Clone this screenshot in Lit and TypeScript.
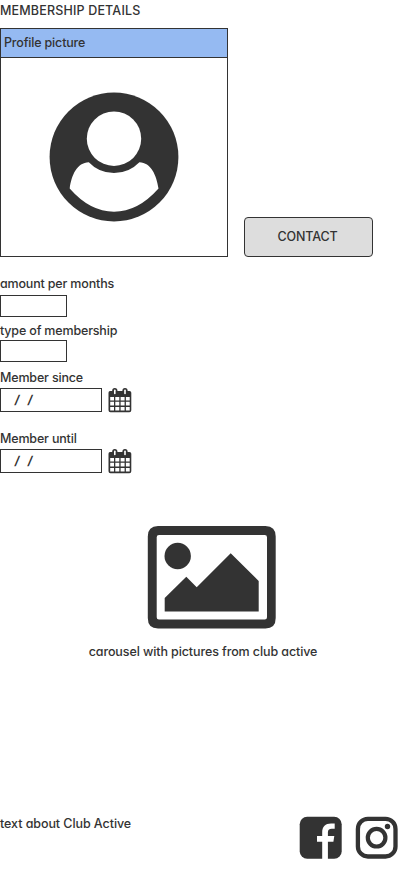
import { LitElement, html, css } from "lit";
import { customElement } from "lit/decorators.js";

const ink = "#333333";

@customElement("date-field")
class DateField extends LitElement {
  static styles = css`
    :host { display: flex; gap: 6px; height: 25px; }
    .box { box-sizing: border-box; width: 102px; height: 24px; border: 1px solid #333; padding-left: 13.5px; line-height: 22px; white-space: pre; font-size: 12px; font-weight: 700; }
    .slash { display: inline-block; width: 13px; }
    .slash span { display: inline-block; transform: skewX(-9deg); }
    svg { display: block; width: 24px; height: 25px; }
  `;
  render() {
    return html`<div class="box"><span class="slash"><span>/</span></span><span class="slash"><span>/</span></span></div>
      <svg viewBox="0 0 24 25" fill=${ink}>
        <path fill-rule="evenodd" d="M2 3H21.500Q23.300 3 23.300 4.800V22.300Q23.300 24.300 21.300 24.300H2.500Q.500 24.300 .500 22.300V4.800Q.500 3 2 3ZM2.200 9V12.500H6V9ZM7.300 9V12.500H11.300V9ZM12.600 9V12.500H16.600V9ZM17.900 9V12.500H21.700V9ZM2.200 13.800V17.600H6V13.800ZM7.300 13.800V17.600H11.300V13.800ZM12.600 13.800V17.600H16.600V13.800ZM17.900 13.800V17.600H21.700V13.800ZM2.200 18.900V22.500H6V18.900ZM7.300 18.900V22.500H11.300V18.900ZM12.600 18.900V22.500H16.600V18.900ZM17.900 18.900V22.500H21.700V18.900Z"/>
        <rect x="4.200" y="0" width="5.200" height="7.300" rx="2.500"/><rect x="14.400" y="0" width="5.200" height="7.300" rx="2.500"/>
        <rect x="6" y="1.500" width="1.600" height="4.800" rx=".8" fill="#fff"/><rect x="16.200" y="1.500" width="1.600" height="4.800" rx=".8" fill="#fff"/>
      </svg>`;
  }
}

@customElement("app-root")
class AppRoot extends LitElement {
  static styles = css`
    :host {
      display: flex; flex-direction: column; box-sizing: border-box; height: 893px; width: 401px;
      background: #fff; color: #333; overflow: hidden;
      font: 500 12.5px/20px Inter, "Liberation Sans", sans-serif;
      font-feature-settings: "cv11" 1, "calt" 0;
      letter-spacing: -0.17px;
    }
    .label { height: 20px; white-space: nowrap; }
    .title { padding-top: 1px; margin-bottom: 7px; letter-spacing: 0.17px; }
    .top { display: flex; align-items: flex-end; gap: 16px; margin-bottom: 17px; }
    .card { box-sizing: border-box; width: 228px; height: 229px; border: 1px solid #333; }
    .head { box-sizing: border-box; height: 29px; padding-left: 3px; line-height: 28px; background: #95baf2; border-bottom: 1px solid #333; }
    .avatar { display: block; width: 130px; height: 130px; margin: 34px 0 0 48px; }
    .contact { box-sizing: border-box; width: 129px; height: 40px; padding: 0 2px 0 0; border: 1px solid #333; border-radius: 4px; background: #ddd; color: inherit; font: inherit; letter-spacing: inherit; }
    .box { box-sizing: border-box; width: 67px; height: 22px; border: 1px solid #333; }
    .first { margin: 1px 0 4px; }
    .second { margin: -1px 0 6px; }
    date-field { margin-bottom: 16px; }
    .carousel { display: flex; flex-direction: column; align-items: center; width: 406px; margin-top: 35px; letter-spacing: -0.1px; }
    .photo { display: block; width: 130px; height: 104px; margin: 0 0 13px 18px; }
    .foot { display: flex; margin-top: 154px; }
    .about { width: 299px; flex: none; margin-top: -2px; letter-spacing: -0.07px; }
    .logo { display: block; width: 43px; height: 43px; flex: none; margin-right: 13px; }
  `;
  render() {
    return html`
      <div class="label title">MEMBERSHIP DETAILS</div>
      <div class="top">
        <div class="card">
          <div class="head">Profile picture</div>
          <svg class="avatar" viewBox="49 92 130 130" fill=${ink}>
            <circle cx="114" cy="157" r="64.4"/>
            <circle cx="114" cy="138.7" r="27.2" fill="#fff"/>
            <path fill="#fff" d="M69.700 188.500C71.500 175 77 162.500 88.800 162.200Q99 173 114 173T139.400 162.200C151 162.500 156.500 175 158.500 188.500Q138 211.700 114 211.700T69.700 188.500Z"/>
          </svg>
        </div>
        <button class="contact">CONTACT</button>
      </div>
      <div class="label">amount per months</div>
      <div class="box first"></div>
      <div class="label">type of membership</div>
      <div class="box second"></div>
      <div class="label">Member since</div>
      <date-field></date-field>
      <div class="label">Member until</div>
      <date-field></date-field>
      <div class="carousel">
        <svg class="photo" viewBox="147 525 130 104" fill=${ink}>
          <path fill-rule="evenodd" d="M158 526H265.500Q275.700 526 275.700 536.500V618Q275.700 628.500 265.500 628.500H158Q147.800 628.500 147.800 618V536.500Q147.800 526 158 526ZM159 535Q156.700 535 156.700 537.300V617.300Q156.700 619.600 159 619.600H264.700Q267 619.600 267 617.300V537.300Q267 535 264.700 535Z"/>
          <circle cx="177.700" cy="556" r="13.200"/>
          <path d="M164.700 611.500V598L186.300 576.700L196.700 587.200L230.700 553.300L258.700 581V611.500Z"/>
        </svg>
        <div class="label">carousel with pictures from club active</div>
      </div>
      <div class="foot">
        <div class="label about">text about Club Active</div>
        <svg class="logo" viewBox="299 816 43 43">
          <rect x="299.700" y="816.700" width="42" height="42" rx="7.500" fill=${ink}/>
          <path fill="#fff" d="M322.200 859V841.800H317V836H322.200V832.200C322.200 826.200 325.500 823.400 331 823.400H334.700V828.700H331.800C329 828.700 327.900 829.900 327.900 832.500V836H334.300L333.400 841.800H327.900V859Z"/>
        </svg>
        <svg class="logo" viewBox="355 816 43 43" fill="none" stroke=${ink}>
          <rect x="357.900" y="818.900" width="37.600" height="37.600" rx="10" stroke-width="4.300"/>
          <circle cx="376.600" cy="837.700" r="8.800" stroke-width="4.200"/>
          <circle cx="387.500" cy="826.500" r="2.700" fill=${ink} stroke="none"/>
        </svg>
      </div>`;
  }
}
